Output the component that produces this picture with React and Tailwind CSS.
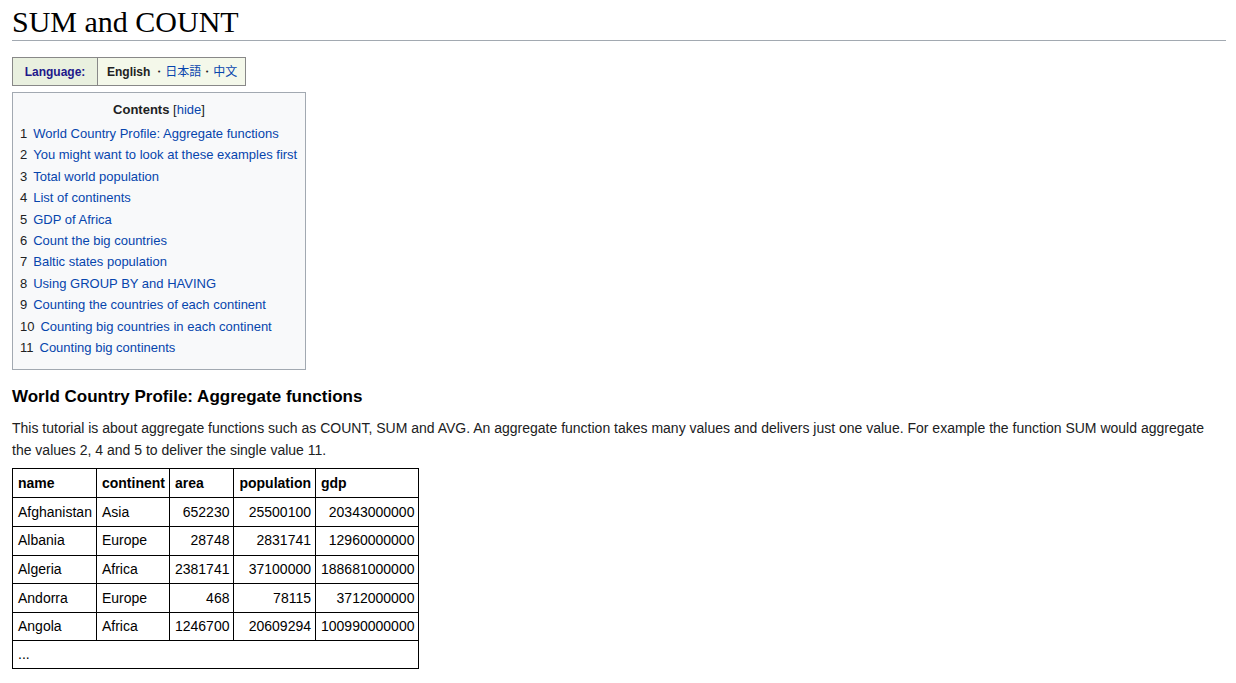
export default function App() {
  const toc = [
    ["1", "World Country Profile: Aggregate functions"],
    ["2", "You might want to look at these examples first"],
    ["3", "Total world population"],
    ["4", "List of continents"],
    ["5", "GDP of Africa"],
    ["6", "Count the big countries"],
    ["7", "Baltic states population"],
    ["8", "Using GROUP BY and HAVING"],
    ["9", "Counting the countries of each continent"],
    ["10", "Counting big countries in each continent"],
    ["11", "Counting big continents"],
  ];
  const rows = [
    ["Afghanistan", "Asia", "652230", "25500100", "20343000000"],
    ["Albania", "Europe", "28748", "2831741", "12960000000"],
    ["Algeria", "Africa", "2381741", "37100000", "188681000000"],
    ["Andorra", "Europe", "468", "78115", "3712000000"],
    ["Angola", "Africa", "1246700", "20609294", "100990000000"],
  ];
  const sans = { fontFamily: '"Liberation Sans", Arial, sans-serif' };
  return (
    <div className="bg-white min-h-[683px] pl-[12px] pr-[10px] text-[#202122]" style={sans}>
      <h1
        className="text-[30px] leading-[34px] pt-[5px] pb-[1px] border-b border-[#a2a9b1] text-black"
        style={{ fontFamily: '"Liberation Serif", "Times New Roman", serif' }}
      >
        SUM and COUNT
      </h1>
      <div className="mt-[16px] flex">
        <div className="flex border border-[#888] text-[12px] h-[29px]">
          <div className="w-[85px] bg-[#e9f0df] border-r border-[#888] flex items-center justify-center font-bold text-[#22188a]">
            Language:
          </div>
          <div className="bg-[#f4f8ea] flex items-center pl-[9px] pr-[8px] font-bold text-[#222]">
            English
            <span className="font-bold ml-[4px] mr-[1px] text-[10px]">・</span>
            <span className="font-normal text-[#0645ad]" style={{ fontFamily: '"Liberation Sans", "Noto Sans CJK JP", sans-serif' }}>日本語</span>
            <span className="font-bold mx-[1px] text-[10px]">・</span>
            <span className="font-normal text-[#0645ad]" style={{ fontFamily: '"Liberation Sans", "Noto Sans CJK SC", sans-serif' }}>中文</span>
          </div>
        </div>
      </div>
      <div className="mt-[6px] w-[294px] border border-[#a2a9b1] bg-[#f8f9fa] pt-[8px] pb-[11px] px-[7px] text-[13px]">
        <div className="text-center leading-[18px]">
          <span className="font-bold">Contents</span>{" "}
          <span className="text-[#202122]">[</span>
          <span className="text-[#0645ad]">hide</span>
          <span>]</span>
        </div>
        <div className="mt-[4px]">
          {toc.map(([n, t]) => (
            <div key={n} className="leading-[21.4px] whitespace-nowrap">
              <span className="pr-[6px]">{n}</span>
              <span className="text-[#0645ad]">{t}</span>
            </div>
          ))}
        </div>
      </div>
      <h2 className="mt-[16px] text-[17px] font-bold leading-[22px] text-black">
        World Country Profile: Aggregate functions
      </h2>
      <p className="mt-[9px] text-[14px] leading-[22px]">
        This tutorial is about aggregate functions such as COUNT, SUM and AVG. An aggregate function takes many values and delivers just one value. For example the function SUM would aggregate the values 2, 4 and 5 to deliver the single value 11.
      </p>
      <table className="mt-[7px] border-collapse border border-black text-[14px] text-black">
        <thead>
          <tr className="h-[29px]">
            {["name", "continent", "area", "population", "gdp"].map((h) => (
              <th key={h} className="border border-black pl-[5px] pr-[4px] text-left font-bold">
                {h}
              </th>
            ))}
          </tr>
        </thead>
        <tbody>
          {rows.map((r) => (
            <tr key={r[0]} className="h-[28.6px]">
              <td className="border border-black pl-[5px] pr-[4px]">{r[0]}</td>
              <td className="border border-black pl-[5px] pr-[4px]">{r[1]}</td>
              <td className="border border-black pl-[5px] pr-[4px] text-right">{r[2]}</td>
              <td className="border border-black pl-[5px] pr-[4px] text-right">{r[3]}</td>
              <td className="border border-black pl-[5px] pr-[4px] text-right">{r[4]}</td>
            </tr>
          ))}
          <tr className="h-[28px]">
            <td colSpan={5} className="border border-black px-[5px]">...</td>
          </tr>
        </tbody>
      </table>
    </div>
  );
}
